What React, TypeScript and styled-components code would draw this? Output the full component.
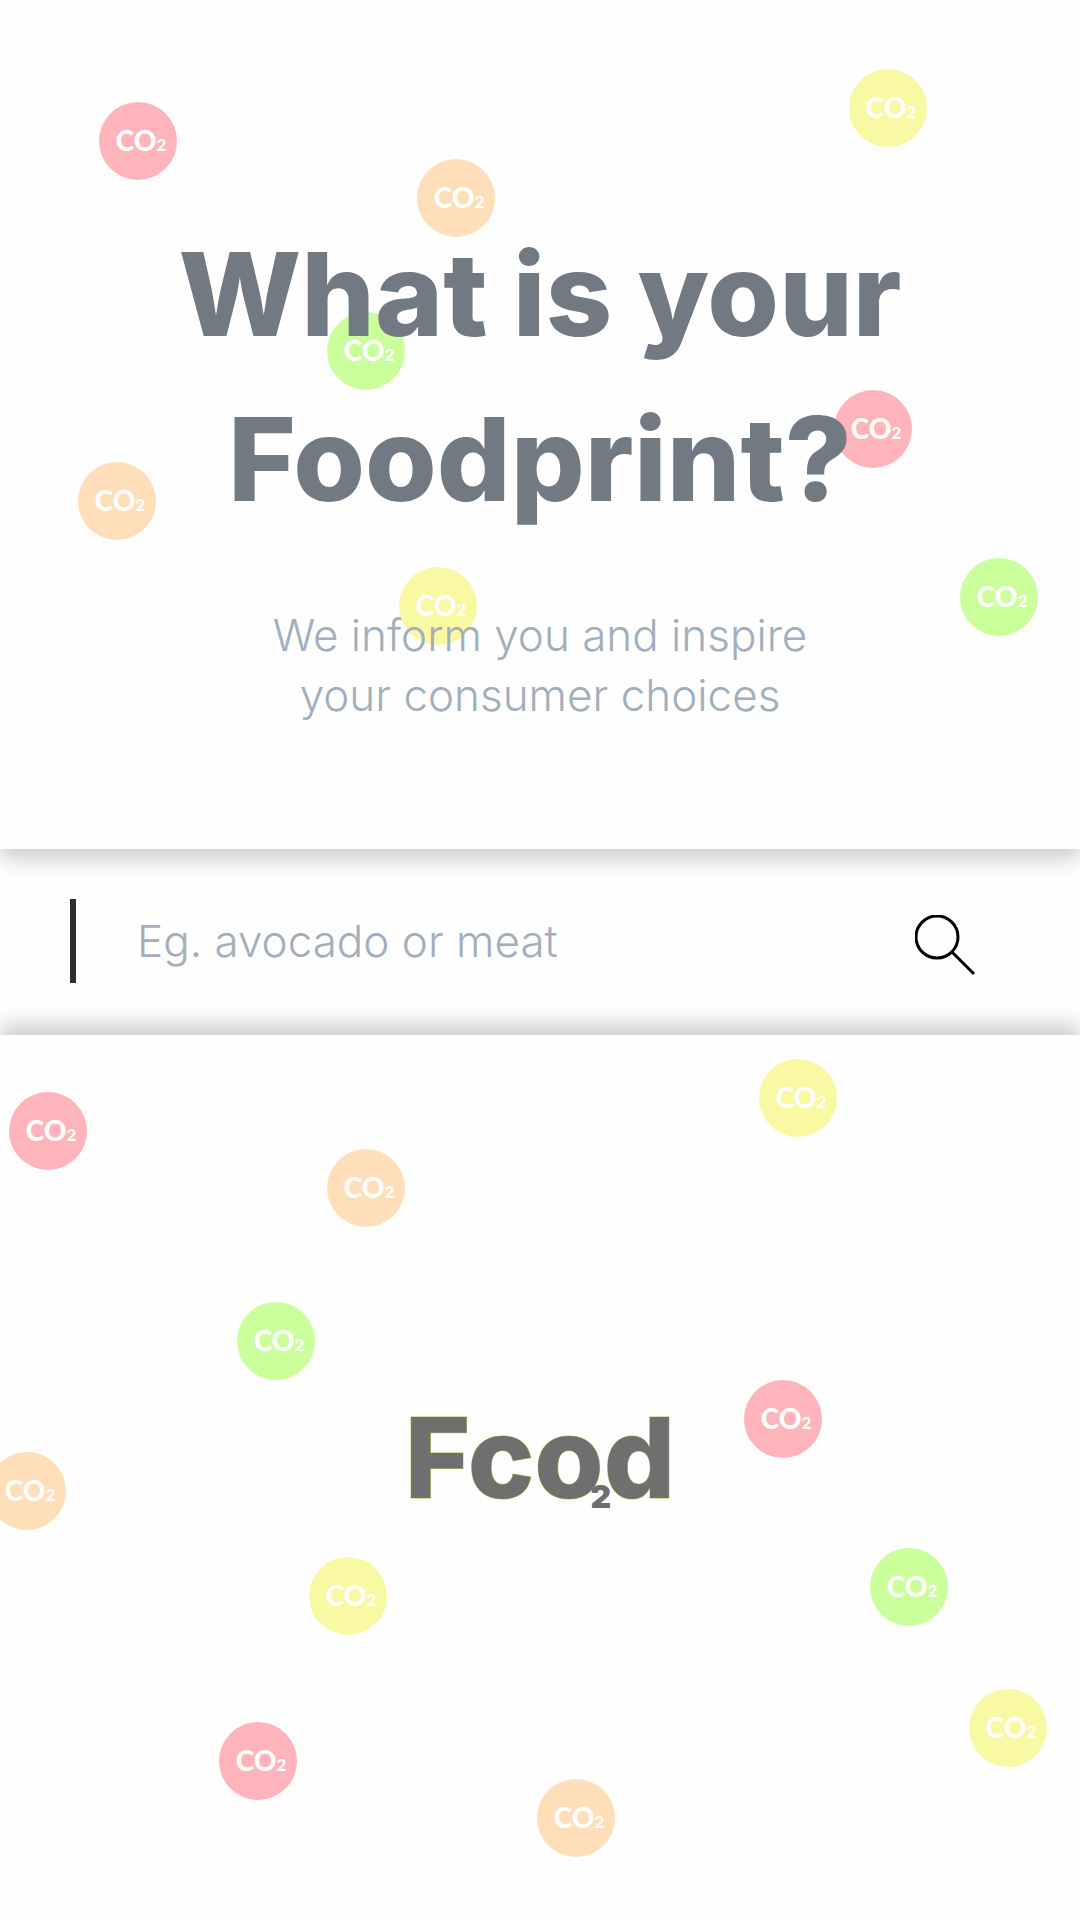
import React from "react";
import styled, { createGlobalStyle } from "styled-components";

const GlobalStyle = createGlobalStyle`
  *, *::before, *::after { box-sizing: border-box; }
  body {
    margin: 0;
    background: #fefefe;
    font-family: Inter, "Liberation Sans", sans-serif;
  }
`;

const tones = {
  red: "#ffb3ba",
  orange: "#ffdfba",
  yellow: "#f9f8a3",
  green: "#caff9b",
};

type Tone = keyof typeof tones;
type Spot = { tone: Tone; x: number; y: number };

const heroSpots: Spot[] = [
  { tone: "red", x: -441, y: 102 },
  { tone: "orange", x: -123, y: 159 },
  { tone: "green", x: -213, y: 312 },
  { tone: "yellow", x: 309, y: 69 },
  { tone: "red", x: 294, y: 390 },
  { tone: "orange", x: -462, y: 462 },
  { tone: "yellow", x: -141, y: 567 },
  { tone: "green", x: 420, y: 558 },
];

const footerSpots: Spot[] = [
  { tone: "red", x: -531, y: 57 },
  { tone: "orange", x: -213, y: 114 },
  { tone: "green", x: -303, y: 267 },
  { tone: "yellow", x: 219, y: 24 },
  { tone: "red", x: 204, y: 345 },
  { tone: "orange", x: -552, y: 417 },
  { tone: "yellow", x: -231, y: 522 },
  { tone: "green", x: 330, y: 513 },
  { tone: "yellow", x: 429, y: 654 },
  { tone: "red", x: -321, y: 687 },
  { tone: "orange", x: -3, y: 744 },
];

const Page = styled.div`
  display: flex;
  flex-direction: column;
  min-height: 100vh;
  overflow: hidden;
`;

const Hero = styled.header`
  position: relative;
  z-index: 1;
  display: flex;
  flex-direction: column;
  align-items: center;
  padding: 212px 24px 124px;
  background: #fefefe;
  box-shadow: 0 10px 20px rgba(0, 0, 0, 0.2);
  text-align: center;
`;

const Title = styled.h1`
  position: relative;
  z-index: 1;
  max-width: 900px;
  margin: 0;
  color: #717a83;
  font-size: 116px;
  font-weight: 800;
  line-height: 165px;
`;

const Tagline = styled.p`
  position: relative;
  z-index: 1;
  max-width: 600px;
  margin: 63px 0 0;
  color: #a1aebd;
  font-size: 44px;
  font-weight: 300;
  line-height: 60px;
`;

const SearchForm = styled.form`
  display: flex;
  align-items: center;
  padding: 50px 98px 52px 70px;
`;

const SearchInput = styled.input`
  flex: 1;
  min-width: 0;
  height: 84px;
  padding: 0 0 0 61px;
  border: 0;
  border-left: 6px solid #2b2d2e;
  outline: 0;
  background: transparent;
  color: #717a83;
  font: 300 44px/60px Inter, "Liberation Sans", sans-serif;

  &::placeholder {
    color: #a1aebd;
    opacity: 1;
  }
`;

const SearchButton = styled.button`
  display: flex;
  padding: 14px 6px 6px;
  border: 0;
  background: transparent;
  cursor: pointer;
`;

const Footer = styled.footer`
  position: relative;
  z-index: 1;
  flex: 1;
  display: flex;
  justify-content: center;
  align-items: flex-start;
  padding: 358px 24px;
  background: #fefefe;
  box-shadow: 0 -10px 20px rgba(0, 0, 0, 0.2);
`;

const Logo = styled.div`
  position: relative;
  z-index: 1;
  color: #706f6f;
  font-size: 112px;
  font-weight: 800;
  line-height: 128px;
  -webkit-text-stroke: 1px #b4cc50;
  paint-order: stroke fill;
`;

const LogoSub = styled.sub`
  position: absolute;
  right: 64px;
  bottom: 8px;
  font-size: 32px;
  font-weight: 900;
  line-height: 32px;
  -webkit-text-stroke: 0;
`;

const BubbleLayer = styled.div`
  position: absolute;
  inset: 0;
  overflow: hidden;
`;

const Bubble = styled.span<{ $tone: Tone; $x: number; $y: number }>`
  position: absolute;
  top: ${(p) => p.$y}px;
  left: calc(50% + ${(p) => p.$x}px);
  display: flex;
  align-items: baseline;
  justify-content: center;
  width: 78px;
  height: 78px;
  padding-left: 6px;
  border-radius: 50%;
  background: ${(p) => tones[p.$tone]};
  color: #fefefe;
  font-family: Lato, "Liberation Sans", sans-serif;
  font-size: 28px;
  font-weight: 900;
  line-height: 76px;
`;

const BubbleSub = styled.span`
  font-size: 17px;
`;

function Bubbles({ spots }: { spots: Spot[] }) {
  return (
    <BubbleLayer>
      {spots.map((s) => (
        <Bubble key={`${s.x}:${s.y}`} $tone={s.tone} $x={s.x} $y={s.y}>
          CO<BubbleSub>2</BubbleSub>
        </Bubble>
      ))}
    </BubbleLayer>
  );
}

export default function App() {
  return (
    <Page>
      <GlobalStyle />
      <Hero>
        <Bubbles spots={heroSpots} />
        <Title>
          What is your
          <br />
          Foodprint?
        </Title>
        <Tagline>
          We inform you and inspire
          <br />
          your consumer choices
        </Tagline>
      </Hero>
      <SearchForm role="search" onSubmit={(e) => e.preventDefault()}>
        <SearchInput type="text" aria-label="Search food" placeholder="Eg. avocado or meat" />
        <SearchButton type="submit" aria-label="Search">
          <svg width="61" height="61" viewBox="0 0 61 61" fill="none" stroke="#000" strokeWidth="3">
            <circle cx="22" cy="22" r="21" />
            <path d="M37 37 L59 59" />
          </svg>
        </SearchButton>
      </SearchForm>
      <Footer>
        <Bubbles spots={footerSpots} />
        <Logo>
          Fcod<LogoSub>2</LogoSub>
        </Logo>
      </Footer>
    </Page>
  );
}
